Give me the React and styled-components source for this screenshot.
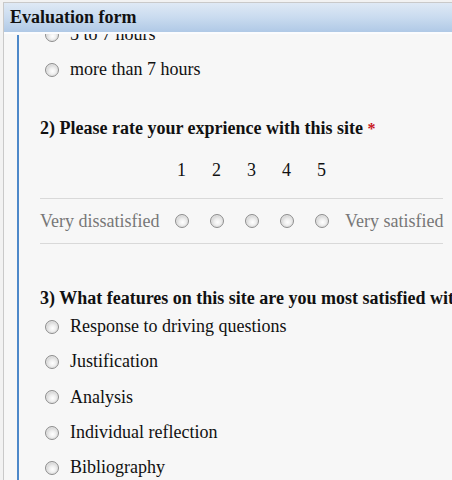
import React from "react";
import styled, { createGlobalStyle } from "styled-components";

const Global = createGlobalStyle`
  html, body { margin: 0; padding: 0; background: #f0f0f0; }
  body { font-family: "Liberation Serif", "Times New Roman", serif; }
  #root { width: 452px; height: 480px; overflow: hidden; }
`;

const serif = `"Liberation Serif", "Times New Roman", serif`;

const Screen = styled.div`
  width: 452px;
  height: 480px;
  overflow: hidden;
  background: #f2f2f2;
  padding: 2px 0 0 3px;
  box-sizing: border-box;
  font-family: ${serif};
`;

const Window = styled.div`
  height: 100%;
  border-top: 1px solid #c9c9c9;
  border-left: 1px solid #c9c9c9;
  background: #f7f7f7;
  display: flex;
  flex-direction: column;
  overflow: hidden;
`;

const Header = styled.div`
  flex: 0 0 auto;
  height: 29px;
  border-bottom: 2px solid #fbfcfe;
  background: linear-gradient(to bottom, #dfe9f5 0%, #c9dbef 50%, #b0c9e6 100%);
  display: flex;
  align-items: center;
  padding-left: 6px;
  font-family: ${serif};
  font-size: 18px;
  font-weight: bold;
  color: #111;
`;

const Body = styled.div`
  flex: 1 1 auto;
  overflow: hidden;
  display: flex;
`;

const Panel = styled.div`
  margin: 1px 0 0 13px;
  border-left: 2px solid #4d88c9;
  flex: 1 1 auto;
  min-width: 0;
`;

const Content = styled.div`
  margin-top: -18px;
  padding: 0 9px 0 21px;
  font-family: ${serif};
  font-size: 18px;
  color: #111;
`;

const OptionRow = styled.div`
  height: ${(p) => p.$h || 35}px;
  display: flex;
  align-items: center;
  padding-left: 5px;
  gap: 11px;
  white-space: nowrap;
`;

const Radio = styled.span`
  flex: 0 0 auto;
  display: inline-block;
  width: 14px;
  height: 14px;
  box-sizing: border-box;
  border-radius: 50%;
  border: 1px solid #8e8e8e;
  background: radial-gradient(circle at 55% 60%, #ffffff 0%, #eeeeee 35%, #cdcdcd 75%, #b9b9b9 100%);
  box-shadow: inset 0 0 0 1px #e4e4e4;
`;

const Question = styled.div`
  margin-top: ${(p) => p.$top}px;
  line-height: 22px;
  font-weight: bold;
  white-space: nowrap;
  color: #111;
`;

const Required = styled.span`
  color: #c8161d;
  font-size: 16px;
`;

const ScaleRow = styled.div`
  display: grid;
  grid-template-columns: 124px repeat(5, 35px) auto;
  align-items: ${(p) => (p.$alignTop ? "start" : "center")};
  justify-items: center;
  height: ${(p) => p.$h}px;
  border-bottom: 1px solid #d9d9d9;
  margin-top: ${(p) => p.$top || 0}px;
`;

const ScaleNum = styled.span`
  line-height: 22px;
`;

const ScaleLabel = styled.span`
  justify-self: start;
  padding-left: ${(p) => (p.$end ? 6 : 0)}px;
  color: #777;
  white-space: nowrap;
`;

const hoursOptions = ["5 to 7 hours", "more than 7 hours"];
const features = [
  "Response to driving questions",
  "Justification",
  "Analysis",
  "Individual reflection",
  "Bibliography",
];

export default function App() {
  return (
    <>
      <Global />
      <Screen>
        <Window>
          <Header>Evaluation form</Header>
          <Body>
            <Panel>
              <Content>
                {hoursOptions.map((o) => (
                  <OptionRow key={o}>
                    <Radio />
                    <span>{o}</span>
                  </OptionRow>
                ))}
                <Question $top={30}>
                  2) Please rate your exprience with this site <Required>*</Required>
                </Question>
                <ScaleRow $h={39} $top={19} $alignTop>
                  <span />
                  {[1, 2, 3, 4, 5].map((n) => (
                    <ScaleNum key={n}>{n}</ScaleNum>
                  ))}
                  <span />
                </ScaleRow>
                <ScaleRow $h={44}>
                  <ScaleLabel>Very dissatisfied</ScaleLabel>
                  {[1, 2, 3, 4, 5].map((n) => (
                    <Radio key={n} />
                  ))}
                  <ScaleLabel $end>Very satisfied</ScaleLabel>
                </ScaleRow>
                <Question $top={43}>
                  3) What features on this site are you most satisfied with this site?
                </Question>
                {features.map((f) => (
                  <OptionRow key={f} $h={35.3}>
                    <Radio />
                    <span>{f}</span>
                  </OptionRow>
                ))}
              </Content>
            </Panel>
          </Body>
        </Window>
      </Screen>
    </>
  );
}
